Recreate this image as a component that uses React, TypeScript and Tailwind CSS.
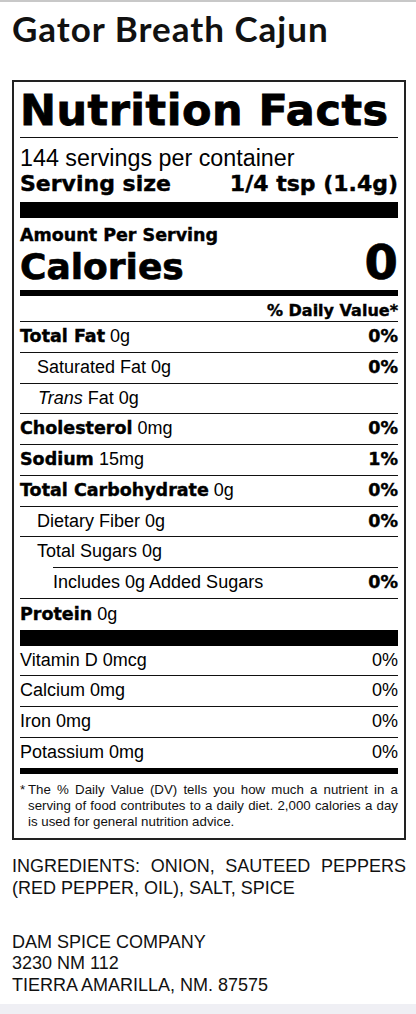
const heavy = "font-['DejaVu_Sans',sans-serif] font-bold [-webkit-text-stroke:0.4px_black]"

interface RowProps {
  label: string
  amount?: string
  dv?: string
  bold?: boolean
  italicPrefix?: string
  indent?: string
  dvBold?: boolean
  tall?: boolean
}

function Line({ inset = false }: { inset?: boolean }) {
  return <div className={inset ? 'ml-[33px] h-px bg-[#111]' : 'h-px bg-[#111]'} />
}

function Row({ label, amount, dv, bold, italicPrefix, indent = '', dvBold = true, tall = false }: RowProps) {
  return (
    <div
      className={`flex justify-between text-[18px] ${tall ? 'h-[30.75px] leading-[30.75px]' : 'h-[29.75px] leading-[29.75px]'} ${indent}`}
    >
      <div className="whitespace-nowrap">
        {italicPrefix && <span className="italic">{italicPrefix} </span>}
        {bold ? <span className={`${heavy} text-[17.5px]`}>{label}</span> : <span>{label}</span>}
        {amount && <span> {amount}</span>}
      </div>
      {dv && <div className={dvBold ? `${heavy} text-[17.5px]` : ''}>{dv}</div>}
    </div>
  )
}

export default function App() {
  return (
    <div className="flex min-h-[1014px] flex-col bg-white font-['Liberation_Sans',Arial,sans-serif] text-black">
      <div className="h-[2px] bg-[#c8c8c8]" />
      <div className="pl-3 pr-[10px]">
        <h1 className="pt-[6px] font-['Lato',sans-serif] text-[35px] font-bold leading-[40px] tracking-[1px] text-[#111]">
          Gator Breath Cajun
        </h1>

        <section className="mt-[32px] border-2 border-[#222] px-[6px] pb-[8px]">
          <h2 className={`${heavy} pt-[7px] text-[43px] leading-[43px] tracking-[0.5px] [-webkit-text-stroke:0.8px_black]`}>
            Nutrition Facts
          </h2>
          <div className="mt-[5px] h-px bg-[#111]" />
          <p className="mt-[7px] text-[23.3px] leading-[26px]">144 servings per container</p>
          <div className={`${heavy} mt-px flex justify-between text-[22px] leading-[24px]`}>
            <span>Serving size</span>
            <span>1/4 tsp (1.4g)</span>
          </div>
          <div className="mt-[6px] h-4 bg-black" />

          <p className={`${heavy} mt-[7px] text-[17.5px] leading-[20px]`}>Amount Per Serving</p>
          <div className={`${heavy} -mt-px flex items-baseline justify-between [-webkit-text-stroke:0.7px_black]`}>
            <span className="text-[36px] leading-[36px]">Calories</span>
            <span className="text-[48px] leading-[36px]">0</span>
          </div>
          <div className="mt-[5px] h-[6px] bg-black" />
          <p className={`${heavy} mt-[5px] text-right text-[16px] leading-[20px]`}>% Daily Value*</p>
          <Line />

          <Row label="Total Fat" amount="0g" dv="0%" bold />
          <Line />
          <Row label="Saturated Fat 0g" dv="0%" indent="pl-[17px]" />
          <Line />
          <Row label="Fat 0g" italicPrefix="Trans" indent="pl-[18px]" />
          <Line />
          <Row label="Cholesterol" amount="0mg" dv="0%" bold />
          <Line />
          <Row label="Sodium" amount="15mg" dv="1%" bold />
          <Line />
          <Row label="Total Carbohydrate" amount="0g" dv="0%" bold />
          <Line />
          <Row label="Dietary Fiber 0g" dv="0%" indent="pl-[17px]" />
          <Line />
          <Row label="Total Sugars 0g" indent="pl-[17px]" />
          <Line inset />
          <Row label="Includes 0g Added Sugars" dv="0%" indent="pl-[33px]" />
          <Line />
          <Row label="Protein" amount="0g" bold tall />
          <div className="h-4 bg-black" />

          <Row label="Vitamin D 0mcg" dv="0%" dvBold={false} />
          <Line />
          <Row label="Calcium 0mg" dv="0%" dvBold={false} />
          <Line />
          <Row label="Iron 0mg" dv="0%" dvBold={false} />
          <Line />
          <Row label="Potassium 0mg" dv="0%" dvBold={false} />
          <div className="h-[6px] bg-black" />

          <div className="mt-[8px] flex text-[13.3px] leading-[16px] text-[#111]">
            <span className="w-[8px] shrink-0">*</span>
            <p className="text-justify">
              The % Daily Value (DV) tells you how much a nutrient in a serving of food contributes to a daily
              diet. 2,000 calories a day is used for general nutrition advice.
            </p>
          </div>
        </section>

        <p className="mt-[15px] text-justify text-[18px] leading-[22px] text-[#111]">
          INGREDIENTS: ONION, SAUTEED PEPPERS (RED PEPPER, OIL), SALT, SPICE
        </p>

        <div className="mt-[33px] mb-[7.6px] text-[18px] leading-[21.7px] text-[#111]">
          <p>DAM SPICE COMPANY</p>
          <p>3230 NM 112</p>
          <p>TIERRA AMARILLA, NM. 87575</p>
        </div>
      </div>
      <div className="flex-1 bg-[#efeff4]" />
    </div>
  )
}
